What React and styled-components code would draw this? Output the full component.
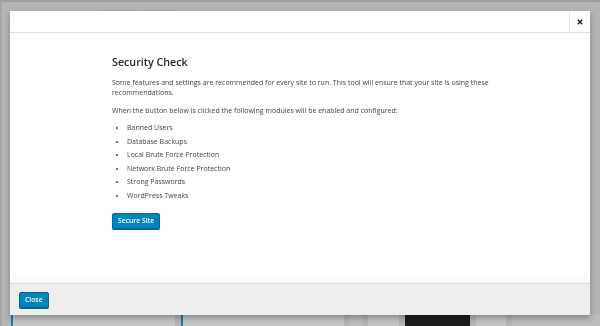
import React from "react";
import styled, { createGlobalStyle } from "styled-components";

const Global = createGlobalStyle`
  html, body { margin: 0; padding: 0; }
  body {
    width: 600px;
    height: 326px;
    overflow: hidden;
    background: #b5b5b5;
    font-family: "Open Sans", "Liberation Sans", sans-serif;
  }
`;

const Page = styled.div`
  height: 326px;
  box-sizing: border-box;
  border-top: 2px solid #9e9e9e;
  border-left: 2px solid #a6a6a6;
  display: flex;
  flex-direction: column;
  justify-content: space-between;
`;

const TopTabs = styled.div`
  display: flex;
  gap: 5px;
  padding: 8px 0 0 98px;
`;

const Tab = styled.div`
  width: ${(p) => p.w}px;
  height: 4px;
  background: #a9a9a9;
`;

const CardRow = styled.div`
  display: flex;
  align-items: flex-end;
  height: 11px;
  padding-left: 9px;
  gap: 6px;
`;

const Card = styled.div`
  width: ${(p) => p.w}px;
  height: 11px;
  background: ${(p) => p.bg};
  border-left: ${(p) => (p.accent ? "2px solid #1f7aa6" : "none")};
  box-sizing: border-box;
`;

const Overlay = styled.div`
  position: fixed;
  inset: 0;
  box-sizing: border-box;
  padding: 11px 10px 11px 10px;
  display: flex;
`;

const Modal = styled.div`
  flex: 1;
  display: flex;
  flex-direction: column;
  background: #fff;
  box-shadow: 0 3px 6px rgba(0, 0, 0, 0.3);
  overflow: hidden;
`;

const Header = styled.div`
  height: 21px;
  flex: none;
  display: flex;
  justify-content: flex-end;
  border-bottom: 1px solid #e2e2e2;
`;

const CloseX = styled.button`
  width: 21px;
  height: 21px;
  border: none;
  border-left: 1px solid #e8e8e8;
  background: transparent;
  padding: 0;
  display: flex;
  align-items: center;
  justify-content: center;
  color: #222;
`;

const Body = styled.div`
  flex: 1;
  padding: 22px 100px 0 102px;
  color: #444;
  font-size: 7px;
  line-height: 10px;
`;

const Title = styled.h1`
  margin: 0 0 9px;
  font-size: 10.7px;
  line-height: 14px;
  font-weight: 600;
  color: #23282d;
`;

const Para = styled.p`
  margin: 0 0 8px;
`;

const List = styled.ul`
  margin: -3px 0 11px;
  padding-left: 15px;
  list-style: disc;
`;

const Item = styled.li`
  line-height: 13.5px;
  &::marker {
    font-size: 6px;
  }
`;

const Button = styled.button`
  height: 16px;
  padding: 0 5px;
  border: 1px solid #006799;
  border-radius: 2px;
  background: #0085ba;
  box-shadow: 0 1px 0 #006799;
  color: #fff;
  font-family: "Open Sans", "Liberation Sans", sans-serif;
  font-size: 6.8px;
  line-height: 14px;
  font-weight: 600;
`;

const Footer = styled.div`
  height: 32px;
  flex: none;
  box-sizing: border-box;
  background: #eee;
  border-top: 1px solid #ddd;
  box-shadow: 0 -3px 4px rgba(0, 0, 0, 0.04);
  display: flex;
  align-items: center;
  padding: 0 0 0 9px;
`;

const items = [
  "Banned Users",
  "Database Backups",
  "Local Brute Force Protection",
  "Network Brute Force Protection",
  "Strong Passwords",
  "WordPress Tweaks",
];

export default function App() {
  return (
    <>
      <Global />
      <Page>
        <TopTabs>
          <Tab w={38} />
          <Tab w={31} />
        </TopTabs>
        <CardRow>
          <Card w={168} bg="#c6c6c6" accent />
          <Card w={168} bg="#c6c6c6" accent />
          <Card w={12} bg="#bdbdbd" />
          <Card w={32} bg="#c4c4c4" />
          <Card w={67} bg="#1b1c1e" />
          <Card w={31} bg="#c4c4c4" />
          <Card w={90} bg="#bcbcbc" />
        </CardRow>
      </Page>
      <Overlay>
        <Modal>
          <Header>
            <CloseX aria-label="Close">
              <svg width="6" height="6" viewBox="0 0 6 6">
                <path d="M0.8 0.8 L5.2 5.2 M5.2 0.8 L0.8 5.2" stroke="#222" strokeWidth="1.4" />
              </svg>
            </CloseX>
          </Header>
          <Body>
            <Title>Security Check</Title>
            <Para>
              Some features and settings are recommended for every site to run. This tool will ensure that your site is using these recommendations.
            </Para>
            <Para>When the button below is clicked the following modules will be enabled and configured:</Para>
            <List>
              {items.map((t) => (
                <Item key={t}>{t}</Item>
              ))}
            </List>
            <Button>Secure Site</Button>
          </Body>
          <Footer>
            <Button>Close</Button>
          </Footer>
        </Modal>
      </Overlay>
    </>
  );
}
